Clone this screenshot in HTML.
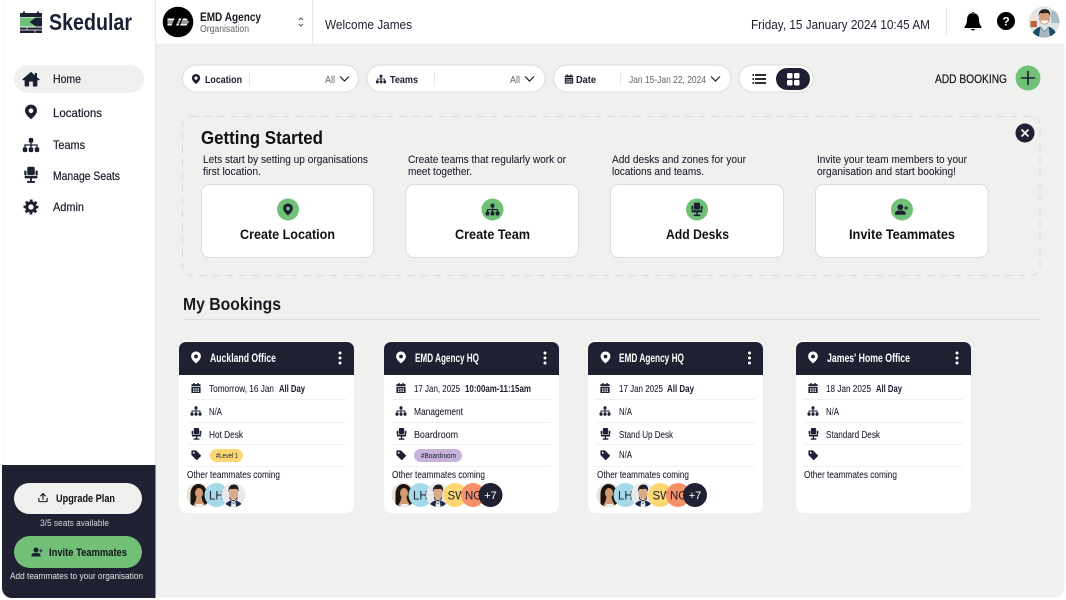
<!DOCTYPE html>
<html lang="en"><head><meta charset="utf-8"><title>Skedular</title>
<style>
html,body{margin:0;padding:0;background:#fff;width:1066px;height:600px;overflow:hidden}
svg{display:block}
text{font-family:"Liberation Sans",sans-serif;fill:#1c1e2e;font-size:10px}
.b{font-weight:bold}
.n{fill:#1c2033}
.m{stroke:#1c1e2e;stroke-width:.22px}
.r{font-size:9.800px;stroke:#1c1e2e;stroke-width:.08px}
.rb{font-size:9.800px;font-weight:bold}
.d{font-size:11px;stroke:#1c1e2e;stroke-width:.08px}
.o{font-size:9.800px;stroke:#1c1e2e;stroke-width:.08px}
.t{font-size:11.500px;font-weight:bold;fill:#fff}
.c{font-size:13.500px;font-weight:bold;fill:#111}
.a{font-size:11.500px}
</style></head><body>
<svg width="1066" height="600" viewBox="0 0 1066 600" xmlns="http://www.w3.org/2000/svg">
<defs>
<symbol id="pin" viewBox="0 0 24 24"><path fill="currentColor" fill-rule="evenodd" d="M12 1C6.800 1 3 4.900 3 10c0 5.800 6.600 10.600 9 13 2.400-2.400 9-7.200 9-13 0-5.100-3.800-9-9-9zm0 5.600a3.500 3.500 0 1 1 0 7 3.500 3.500 0 0 1 0-7z"/></symbol>
<symbol id="team" viewBox="0 0 24 24"><g fill="currentColor"><rect x="9" y="2.500" width="6" height="6.500" rx="2"/><rect x="1" y="15" width="6" height="6.500" rx="2"/><rect x="9" y="15" width="6" height="6.500" rx="2"/><rect x="17" y="15" width="6" height="6.500" rx="2"/></g><path d="M12 8v7M4 15v-3h16v3" fill="none" stroke="currentColor" stroke-width="1.800"/></symbol>
<symbol id="chair" viewBox="0 0 24 24"><g fill="currentColor"><rect x="7" y="1" width="10" height="11" rx="2"/><rect x="3" y="6" width="3" height="6.500" rx="1.300"/><rect x="18" y="6" width="3" height="6.500" rx="1.300"/><rect x="3.500" y="13" width="17" height="3.500" rx="1"/><rect x="10.800" y="16" width="2.400" height="4.500"/><rect x="6.500" y="20" width="11" height="2.500" rx="1"/></g></symbol>
<symbol id="gear" viewBox="0 0 24 24"><circle cx="12" cy="12" r="6.300" fill="none" stroke="currentColor" stroke-width="4.600"/><circle cx="12" cy="12" r="9.500" fill="none" stroke="currentColor" stroke-width="3.400" stroke-dasharray="4 3.460" stroke-dashoffset="2"/></symbol>
<symbol id="home" viewBox="0 0 24 24"><path fill="currentColor" d="M12 2.500 0.800 12.200c-.6.600-.2 1.500.6 1.500H3.500V21c0 .6.400 1 1 1h5v-6.500h5V22h5c.6 0 1-.4 1-1v-7.300h2.100c.8 0 1.200-.9.600-1.500L20 9.600V4h-3v3z"/></symbol>
<symbol id="cal" viewBox="0 0 24 24"><path fill="currentColor" fill-rule="evenodd" d="M6 1h3v2.500h6V1h3v2.500h3a1 1 0 0 1 1 1V8H2V4.500a1 1 0 0 1 1-1h3zM2 9.500h20V22a1 1 0 0 1-1 1H3a1 1 0 0 1-1-1zm3.500 3v3h3v-3zm5 0v3h3v-3zm5 0v3h3v-3zm-10 5v3h3v-3zm5 0v3h3v-3zm5 0v3h3v-3z"/></symbol>
<symbol id="tag" viewBox="0 0 24 24"><path fill="currentColor" fill-rule="evenodd" d="M2 3.500A1.500 1.500 0 0 1 3.500 2H12l10.500 10.500c.6.600.6 1.500 0 2.100L14.600 22.500c-.6.600-1.500.6-2.100 0L2 12zM7 5a2 2 0 1 0 0 4 2 2 0 0 0 0-4z"/></symbol>
<symbol id="uplus" viewBox="0 0 24 24"><g fill="currentColor"><circle cx="10" cy="8" r="5"/><path d="M1 21v-2c0-3.300 2.700-5 6-5h6c3.300 0 6 1.700 6 5v2z"/><rect x="19" y="6" width="1.800" height="7"/><rect x="16.400" y="8.600" width="7" height="1.800"/></g></symbol>
<symbol id="up" viewBox="0 0 24 24"><path d="M12 16V4M7 8.500 12 3.500l5 5M3 14v5a2 2 0 0 0 2 2h14a2 2 0 0 0 2-2v-5" fill="none" stroke="currentColor" stroke-width="2.400" stroke-linecap="round" stroke-linejoin="round"/></symbol>
<symbol id="woman" viewBox="0 0 24 24"><rect width="24" height="24" fill="#e8e2d8"/><path d="M4 24V11C4 5 7.500 1 12 1s8 4 8.500 9c.4 5 1.500 9 2.500 14z" fill="#1d1410"/><ellipse cx="12.500" cy="10" rx="4" ry="5" fill="#d09a73"/><path d="M10 14h5l1 4 4 6H6l3-6z" fill="#d09a73"/><path d="M8 24l2-3h6l2 3z" fill="#eef2f4"/></symbol>
<symbol id="man" viewBox="0 0 24 24"><rect width="24" height="24" fill="#e9e9ee"/><ellipse cx="12" cy="10.500" rx="4.600" ry="5.600" fill="#d8aa88"/><path d="M7 9c-.5-5 2-7.500 5.500-7.500S17.500 4 17 9c-.5-2-1.500-3-3-3.300-2 .6-4 .3-5.500.3C8 7 7.300 8 7 9z" fill="#23201f"/><path d="M8 13c1 3 2.500 4 4 4s3-1 4-4v3l-4 2.500L8 16z" fill="#3a2d25"/><path d="M3 24c.5-3.500 3-5.500 6.500-6.500l2.500 3 2.500-3C18 18.500 20.500 20.500 21 24z" fill="#1c2a4a"/><path d="M10 18.500l2 3 2-3 .5 5.500h-5z" fill="#f4f4f4"/></symbol>
<symbol id="james" viewBox="0 0 30 30"><rect width="30" height="30" fill="#dde5e8"/><rect x="0" y="6" width="9" height="14" fill="#eee4d6"/><rect x="22" y="4" width="8" height="12" fill="#a8bcc6"/><rect x="2" y="14" width="6" height="6" fill="#b5623f"/><ellipse cx="15.500" cy="11" rx="5.300" ry="6.500" fill="#d29e7c"/><path d="M10 9.500c-.5-5 2.500-7 5.700-7s6 2 5.300 7c-.6-2.200-1.800-3-3-3.300-2.600.5-4.600.4-6.500.2-.8.700-1.200 1.800-1.500 3.100z" fill="#2a211c"/><path d="M12 13.500h7c-.5 2.400-1.800 3-3.500 3s-3-.6-3.500-3z" fill="#fff"/><path d="M3 30c.5-6 4-9 8.500-10.500L15.500 24l4-4.500C24 21 27 24 27.500 30z" fill="#1d4a66"/><path d="M11.500 20l4 4.500 4-4.500 1.500 10H10z" fill="#a9b6bd"/></symbol>
<clipPath id="c0"><circle cx="12" cy="12" r="12"/></clipPath>
<clipPath id="ja"><circle cx="15.500" cy="15.500" r="15.500"/></clipPath>
</defs>

<rect width="1066" height="600" fill="#fff"/>
<path d="M156 44H1064V587a10 10 0 0 1-10 10H156z" fill="#f0f0ee" stroke="#e8e8e6" stroke-width=".6"/>
<path d="M155.500 0V465M312.500 0V44" stroke="#e8e8e6" fill="none"/>
<path d="M4.500 0V465" stroke="#f8f8f8" fill="none"/>

<!-- logo -->
<g>
<rect x="20" y="13" width="22" height="4" fill="#1c2033"/>
<rect x="23" y="11.500" width="2" height="2.500" fill="#1c2033"/><rect x="37" y="11.500" width="2" height="2.500" fill="#1c2033"/>
<rect x="20" y="17.500" width="22" height="9" fill="#1c2033"/>
<path d="M20 17.500H36L29.500 22l6.500 4.500H20z" fill="#6fc07a"/>
<path d="M20 27.500h22V33H20z" fill="#1c2033"/>
<path d="M20 30h22M27 27.500V30M35 30v3" stroke="#fff" stroke-width=".7"/>
</g>
<text x="49" y="30" class="b n" style="font-size:23px" textLength="83" lengthAdjust="spacingAndGlyphs">Skedular</text>

<!-- org -->
<circle cx="178" cy="22" r="15.300" fill="#000"/>
<path d="M167.500 18.500h7l-3 7h-4zM176 25.500l3-7h2.500l-3 7zM183 18.500h3.500l2.500 3.500-2.500 3.500H180z" fill="#fff"/>
<path d="M167 21h22M167 23h22" stroke="#000" stroke-width=".7"/>
<text x="200" y="21" class="b" style="font-size:11.500px;fill:#1a1a22" textLength="61" lengthAdjust="spacingAndGlyphs">EMD Agency</text>
<text x="200" y="32" style="font-size:10px;fill:#666" textLength="49" lengthAdjust="spacingAndGlyphs">Organisation</text>
<path d="M299 20l2-2 2 2M299 24l2 2 2-2" stroke="#555" fill="none" stroke-width="1"/>
<text x="325" y="29" style="font-size:13px" textLength="87" lengthAdjust="spacingAndGlyphs">Welcome James</text>
<text x="751" y="29" style="font-size:13px" textLength="179" lengthAdjust="spacingAndGlyphs">Friday, 15 January 2024 10:45 AM</text>
<path d="M946.500 8V35" stroke="#e8e8e6"/>
<path d="M973 13c-4 0-6 3-6 6.500 0 3.500-1 5.500-2.500 7.300-.4.500 0 1.200.6 1.200h15.800c.6 0 1-.7.600-1.200-1.500-1.800-2.500-3.800-2.500-7.300 0-3.500-2-6.500-6-6.500z M973 30.500c-1.100 0-2-.6-2-1.500h4c0 .9-.9 1.500-2 1.500z M971.600 13.500a1.400 1.400 0 0 1 2.800 0z" fill="#000"/>
<circle cx="1006" cy="21" r="9" fill="#000"/>
<text x="1006" y="25.500" text-anchor="middle" class="b" style="font-size:12px;fill:#fff">?</text>
<g transform="translate(1028.500 6.500)"><use href="#james" width="31" height="31" clip-path="url(#ja)"/></g>

<!-- nav -->
<rect x="14" y="65" width="130" height="28" rx="14" fill="#f0f0ee"/>
<g color="#1c2033">
<use href="#home" x="22" y="70" width="18" height="18"/>
<use href="#pin" x="23" y="104" width="16" height="16"/>
<use href="#team" x="22" y="136" width="18" height="18"/>
<use href="#chair" x="22" y="166" width="18" height="18"/>
<use href="#gear" x="23" y="199" width="16" height="16"/>
</g>
<text x="53" y="83" class="m" style="font-size:12px" textLength="28" lengthAdjust="spacingAndGlyphs">Home</text>
<text x="53" y="117" class="m" style="font-size:12px" textLength="49" lengthAdjust="spacingAndGlyphs">Locations</text>
<text x="53" y="149" class="m" style="font-size:12px" textLength="32" lengthAdjust="spacingAndGlyphs">Teams</text>
<text x="53" y="180" class="m" style="font-size:12px" textLength="67" lengthAdjust="spacingAndGlyphs">Manage Seats</text>
<text x="53" y="211" class="m" style="font-size:12px" textLength="31" lengthAdjust="spacingAndGlyphs">Admin</text>

<!-- bottom panel -->
<path d="M2 465H155.500V598H12a10 10 0 0 1-10-10z" fill="#1f2133"/>
<rect x="14" y="483" width="128" height="31" rx="15.500" fill="#f0f0ee"/>
<use href="#up" x="37.500" y="492" width="11" height="11" color="#111"/>
<text x="56" y="502" class="b" style="font-size:11px;fill:#111" textLength="59" lengthAdjust="spacingAndGlyphs">Upgrade Plan</text>
<text x="40" y="526" style="font-size:9px;fill:#d8d8d8" textLength="69" lengthAdjust="spacingAndGlyphs">3/5 seats available</text>
<rect x="14" y="536" width="128" height="32" rx="16" fill="#70c078"/>
<use href="#uplus" x="31" y="546" width="12" height="12" color="#1c2033"/>
<text x="49" y="556" class="b" style="font-size:11px;fill:#111" textLength="78" lengthAdjust="spacingAndGlyphs">Invite Teammates</text>
<text x="10" y="579" style="font-size:9px;fill:#e4e4e4" textLength="133" lengthAdjust="spacingAndGlyphs">Add teammates to your organisation</text>

<!-- filters -->
<g fill="#fff" stroke="#dcdcda">
<rect x="182.500" y="65" width="176" height="27" rx="13.500"/>
<rect x="367" y="65" width="178" height="27" rx="13.500"/>
<rect x="553.500" y="65" width="177.500" height="27" rx="13.500"/>
<rect x="739" y="65" width="74" height="27" rx="13.500"/>
</g>
<path d="M249.500 72v14M434.500 72v14M620.500 72v14" stroke="#e8e8e6"/>
<use href="#pin" x="190.500" y="73" width="11" height="12" color="#1c2033"/>
<use href="#team" x="375.500" y="73.500" width="11" height="11" color="#1c2033"/>
<use href="#cal" x="564" y="74" width="10" height="10" color="#1c2033"/>
<text x="205" y="83" class="b" style="font-size:10.500px" textLength="37" lengthAdjust="spacingAndGlyphs">Location</text>
<text x="390" y="83" class="b" style="font-size:10.500px" textLength="28" lengthAdjust="spacingAndGlyphs">Teams</text>
<text x="576" y="83" class="b" style="font-size:10.500px" textLength="20" lengthAdjust="spacingAndGlyphs">Date</text>
<text x="325" y="83" style="font-size:10px;fill:#666" textLength="10" lengthAdjust="spacingAndGlyphs">All</text>
<text x="510" y="83" style="font-size:10px;fill:#666" textLength="10" lengthAdjust="spacingAndGlyphs">All</text>
<text x="629" y="83" style="font-size:10px;fill:#666" textLength="77" lengthAdjust="spacingAndGlyphs">Jan 15-Jan 22, 2024</text>
<path d="M340 76.500l4.500 4.500 4.500-4.500M525 76.500l4.500 4.500 4.500-4.500M711 76.500l4.500 4.500 4.500-4.500" fill="none" stroke="#1c1e2e" stroke-width="1.200"/>
<path d="M755 75h11M755 79h11M755 83h11" stroke="#111" stroke-width="1.800"/>
<path d="M752.500 75h1.500M752.500 79h1.500M752.500 83h1.500" stroke="#111" stroke-width="1.800"/>
<rect x="776" y="68" width="34" height="22" rx="11" fill="#1f2133"/>
<g fill="#fff"><rect x="787" y="73" width="5.500" height="5.500" rx="1.200"/><rect x="794" y="73" width="5.500" height="5.500" rx="1.200"/><rect x="787" y="80" width="5.500" height="5.500" rx="1.200"/><rect x="794" y="80" width="5.500" height="5.500" rx="1.200"/></g>
<text x="935" y="83" class="m" style="font-size:12px;fill:#111" textLength="72" lengthAdjust="spacingAndGlyphs">ADD BOOKING</text>
<circle cx="1028" cy="78" r="12.500" fill="#70c078"/>
<path d="M1028 71v14M1021 78h14" stroke="#1c2033" stroke-width="1.600"/>

<!-- getting started -->
<rect x="182.500" y="116.500" width="857.500" height="159" rx="9" fill="none" stroke="#d9d9d7" stroke-dasharray="7 6"/>
<circle cx="1025" cy="133" r="9.500" fill="#1f2133"/>
<path d="M1021.500 129.500l7 7M1028.500 129.500l-7 7" stroke="#fff" stroke-width="1.600"/>
<text x="201" y="144" class="b" style="font-size:18.500px;fill:#111" textLength="122" lengthAdjust="spacingAndGlyphs">Getting Started</text>
<text x="203" y="163" class="d" textLength="165" lengthAdjust="spacingAndGlyphs">Lets start by setting up organisations</text>
<text x="203" y="175" class="d" textLength="58" lengthAdjust="spacingAndGlyphs">first location.</text>
<text x="408" y="163" class="d" textLength="158" lengthAdjust="spacingAndGlyphs">Create teams that regularly work or</text>
<text x="408" y="175" class="d" textLength="64" lengthAdjust="spacingAndGlyphs">meet together.</text>
<text x="612" y="163" class="d" textLength="134" lengthAdjust="spacingAndGlyphs">Add desks and zones for your</text>
<text x="612" y="175" class="d" textLength="92" lengthAdjust="spacingAndGlyphs">locations and teams.</text>
<text x="817" y="163" class="d" textLength="150" lengthAdjust="spacingAndGlyphs">Invite your team members to your</text>
<text x="817" y="175" class="d" textLength="139" lengthAdjust="spacingAndGlyphs">organisation and start booking!</text>
<g fill="#fff" stroke="#dcdcda">
<rect x="201.500" y="184.500" width="172" height="73" rx="8"/>
<rect x="406" y="184.500" width="172.500" height="73" rx="8"/>
<rect x="610.500" y="184.500" width="173" height="73" rx="8"/>
<rect x="815.500" y="184.500" width="172.500" height="73" rx="8"/>
</g>
<g fill="#70c078"><circle cx="288" cy="209.500" r="11"/><circle cx="492.500" cy="209.500" r="11"/><circle cx="697" cy="209.500" r="11"/><circle cx="902" cy="209.500" r="11"/></g>
<g color="#1c2033">
<use href="#pin" x="281.500" y="203" width="13" height="13"/>
<use href="#team" x="485" y="202" width="15" height="15"/>
<use href="#chair" x="689.500" y="202" width="15" height="15"/>
<use href="#uplus" x="894.500" y="202.500" width="14" height="14"/>
</g>
<text x="240" y="239" class="c" textLength="95" lengthAdjust="spacingAndGlyphs">Create Location</text>
<text x="455" y="239" class="c" textLength="75" lengthAdjust="spacingAndGlyphs">Create Team</text>
<text x="666" y="239" class="c" textLength="63" lengthAdjust="spacingAndGlyphs">Add Desks</text>
<text x="849" y="239" class="c" textLength="106" lengthAdjust="spacingAndGlyphs">Invite Teammates</text>

<text x="183" y="310" class="b" style="font-size:17.500px;fill:#1a1a22" textLength="98" lengthAdjust="spacingAndGlyphs">My Bookings</text>
<path d="M183 319.500H1040" stroke="#dcdcda"/>

<!-- booking cards -->
<g fill="#fff"><rect x="179" y="341" width="175" height="172" rx="8"/><rect x="384" y="341" width="175" height="172" rx="8"/><rect x="588" y="341" width="175" height="172" rx="8"/><rect x="796" y="341" width="175" height="172" rx="8"/></g>
<g fill="#1f2133">
<path d="M179 375V349a7 7 0 0 1 7-7H347a7 7 0 0 1 7 7V375z"/>
<path d="M384 375V349a7 7 0 0 1 7-7H552a7 7 0 0 1 7 7V375z"/>
<path d="M588 375V349a7 7 0 0 1 7-7H756a7 7 0 0 1 7 7V375z"/>
<path d="M796 375V349a7 7 0 0 1 7-7H964a7 7 0 0 1 7 7V375z"/>
</g>
<g color="#fff">
<use href="#pin" x="189.500" y="351" width="13" height="13"/>
<use href="#pin" x="394.500" y="351" width="13" height="13"/>
<use href="#pin" x="599" y="351" width="13" height="13"/>
<use href="#pin" x="806.500" y="351" width="13" height="13"/>
</g>
<g fill="#fff">
<circle cx="340" cy="353" r="1.500"/><circle cx="340" cy="358" r="1.500"/><circle cx="340" cy="363" r="1.500"/>
<circle cx="545" cy="353" r="1.500"/><circle cx="545" cy="358" r="1.500"/><circle cx="545" cy="363" r="1.500"/>
<circle cx="749.500" cy="353" r="1.500"/><circle cx="749.500" cy="358" r="1.500"/><circle cx="749.500" cy="363" r="1.500"/>
<circle cx="957" cy="353" r="1.500"/><circle cx="957" cy="358" r="1.500"/><circle cx="957" cy="363" r="1.500"/>
</g>
<text x="210" y="362" class="t" textLength="66" lengthAdjust="spacingAndGlyphs">Auckland Office</text>
<text x="415" y="362" class="t" textLength="64" lengthAdjust="spacingAndGlyphs">EMD Agency HQ</text>
<text x="619" y="362" class="t" textLength="65" lengthAdjust="spacingAndGlyphs">EMD Agency HQ</text>
<text x="827" y="362" class="t" textLength="83" lengthAdjust="spacingAndGlyphs">James' Home Office</text>
<g stroke="#f0f0ee">
<path d="M187 399.500H346M187 422.500H346M187 444.500H346M187 466.500H346"/>
<path d="M392 399.500H551M392 422.500H551M392 444.500H551M392 466.500H551"/>
<path d="M596 399.500H755M596 422.500H755M596 444.500H755M596 466.500H755"/>
<path d="M804 399.500H963M804 422.500H963M804 444.500H963M804 466.500H963"/>
</g>
<g color="#1c2033">
<use href="#cal" x="190.500" y="382.500" width="11" height="11"/><use href="#team" x="190" y="405" width="12" height="12"/><use href="#chair" x="190" y="427.500" width="13" height="13"/><use href="#tag" x="190.500" y="449.500" width="11" height="11"/>
<use href="#cal" x="395.500" y="382.500" width="11" height="11"/><use href="#team" x="395" y="405" width="12" height="12"/><use href="#chair" x="395" y="427.500" width="13" height="13"/><use href="#tag" x="395.500" y="449.500" width="11" height="11"/>
<use href="#cal" x="599.500" y="382.500" width="11" height="11"/><use href="#team" x="599" y="405" width="12" height="12"/><use href="#chair" x="599" y="427.500" width="13" height="13"/><use href="#tag" x="599.500" y="449.500" width="11" height="11"/>
<use href="#cal" x="807.500" y="382.500" width="11" height="11"/><use href="#team" x="807" y="405" width="12" height="12"/><use href="#chair" x="807" y="427.500" width="13" height="13"/><use href="#tag" x="807.500" y="449.500" width="11" height="11"/>
</g>
<!-- card 1 text -->
<text x="209" y="392" class="r" textLength="65" lengthAdjust="spacingAndGlyphs">Tomorrow, 16 Jan</text>
<text x="279" y="392" class="rb" textLength="26" lengthAdjust="spacingAndGlyphs">All Day</text>
<text x="209" y="415" class="r" textLength="13" lengthAdjust="spacingAndGlyphs">N/A</text>
<text x="209" y="438" class="r" textLength="34" lengthAdjust="spacingAndGlyphs">Hot Desk</text>
<rect x="210" y="449" width="33" height="13" rx="6.500" fill="#fcd772"/>
<text x="216" y="458" style="font-size:7.500px" textLength="22" lengthAdjust="spacingAndGlyphs">#Level 1</text>
<text x="187" y="478" class="o" textLength="93" lengthAdjust="spacingAndGlyphs">Other teammates coming</text>
<!-- card 2 text -->
<text x="414" y="392" class="r" textLength="46" lengthAdjust="spacingAndGlyphs">17 Jan, 2025</text>
<text x="465" y="392" class="rb" textLength="66" lengthAdjust="spacingAndGlyphs">10:00am-11:15am</text>
<text x="414" y="415" class="r" textLength="49" lengthAdjust="spacingAndGlyphs">Management</text>
<text x="414" y="438" class="r" textLength="44" lengthAdjust="spacingAndGlyphs">Boardroom</text>
<rect x="414" y="449" width="48" height="13" rx="6.500" fill="#c5b3d9"/>
<text x="421" y="458" style="font-size:7.500px" textLength="35" lengthAdjust="spacingAndGlyphs">#Boardroom</text>
<text x="392" y="478" class="o" textLength="93" lengthAdjust="spacingAndGlyphs">Other teammates coming</text>
<!-- card 3 text -->
<text x="619" y="392" class="r" textLength="44" lengthAdjust="spacingAndGlyphs">17 Jan 2025</text>
<text x="667" y="392" class="rb" textLength="27" lengthAdjust="spacingAndGlyphs">All Day</text>
<text x="619" y="415" class="r" textLength="13" lengthAdjust="spacingAndGlyphs">N/A</text>
<text x="619" y="438" class="r" textLength="54" lengthAdjust="spacingAndGlyphs">Stand Up Desk</text>
<text x="619" y="458" class="r" textLength="13" lengthAdjust="spacingAndGlyphs">N/A</text>
<text x="597" y="478" class="o" textLength="92" lengthAdjust="spacingAndGlyphs">Other teammates coming</text>
<!-- card 4 text -->
<text x="826" y="392" class="r" textLength="45" lengthAdjust="spacingAndGlyphs">18 Jan 2025</text>
<text x="876" y="392" class="rb" textLength="26" lengthAdjust="spacingAndGlyphs">All Day</text>
<text x="826" y="415" class="r" textLength="13" lengthAdjust="spacingAndGlyphs">N/A</text>
<text x="826" y="438" class="r" textLength="54" lengthAdjust="spacingAndGlyphs">Standard Desk</text>
<text x="804" y="478" class="o" textLength="93" lengthAdjust="spacingAndGlyphs">Other teammates coming</text>

<!-- avatars -->
<g>
<g transform="translate(186.500 483)"><use href="#woman" width="24" height="24" clip-path="url(#c0)"/></g>
<circle cx="216.500" cy="495" r="12" fill="#a5d9e8"/><text x="209" y="499.500" class="a">LH</text>
<g transform="translate(221.500 483)"><use href="#man" width="24" height="24" clip-path="url(#c0)"/></g>
</g>
<g>
<g transform="translate(391.500 483)"><use href="#woman" width="24" height="24" clip-path="url(#c0)"/></g>
<circle cx="420.500" cy="495" r="12" fill="#a5d9e8"/><text x="413" y="499.500" class="a">LH</text>
<g transform="translate(426 483)"><use href="#man" width="24" height="24" clip-path="url(#c0)"/></g>
<circle cx="455" cy="495" r="12" fill="#fcd772"/><text x="447.500" y="499.500" class="a">SW</text>
<circle cx="473" cy="495" r="12" fill="#f78f68"/><text x="465" y="499.500" class="a">NG</text>
<circle cx="490.500" cy="495" r="12" fill="#1f2133"/><text x="490.500" y="499" text-anchor="middle" style="font-size:11px;fill:#fff">+7</text>
</g>
<g>
<g transform="translate(596.500 483)"><use href="#woman" width="24" height="24" clip-path="url(#c0)"/></g>
<circle cx="625.500" cy="495" r="12" fill="#a5d9e8"/><text x="618" y="499.500" class="a">LH</text>
<g transform="translate(631 483)"><use href="#man" width="24" height="24" clip-path="url(#c0)"/></g>
<circle cx="660" cy="495" r="12" fill="#fcd772"/><text x="652.500" y="499.500" class="a">SW</text>
<circle cx="678" cy="495" r="12" fill="#f78f68"/><text x="670" y="499.500" class="a">NG</text>
<circle cx="695" cy="495" r="12" fill="#1f2133"/><text x="695" y="499" text-anchor="middle" style="font-size:11px;fill:#fff">+7</text>
</g>
</svg>
</body></html>
